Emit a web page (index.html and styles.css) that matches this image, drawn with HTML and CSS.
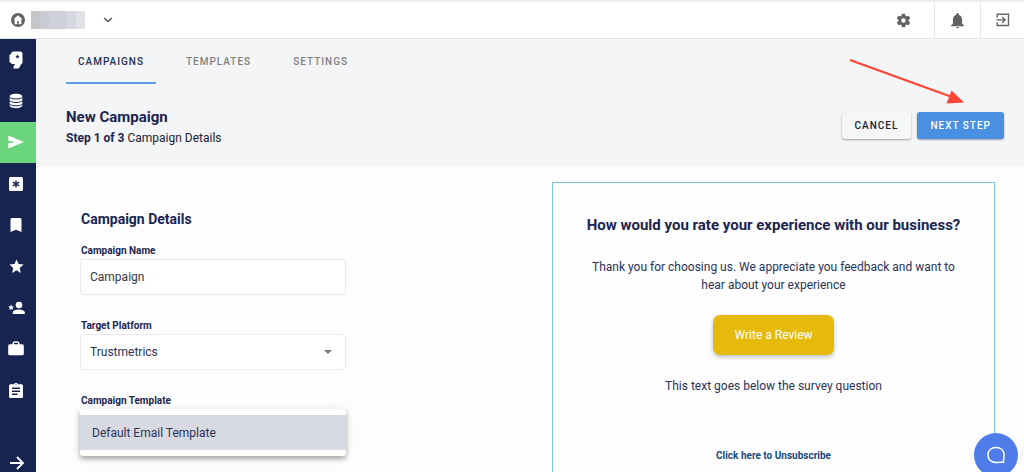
FILE: index.html
```html
<!DOCTYPE html>
<html lang="en">
<head>
<meta charset="utf-8">
<meta name="viewport" content="width=device-width, initial-scale=1">
<title>New Campaign</title>
<link rel="stylesheet" href="styles.css">
</head>
<body>
<div class="app">
  <header class="topbar">
    <div class="account">
      <svg class="home" viewBox="0 0 14 14" aria-hidden="true"><circle cx="7" cy="7" r="7" fill="#616264"/><path d="M7 2.200 2.600 6.300h1v4.900h2.600V7.900h1.600v3.300h2.600V6.300h1z" fill="#fff"/></svg>
      <span class="account-name" aria-hidden="true"><i></i><i></i><i></i><i></i><i></i><i></i></span>
      <button class="icon-button" type="button" aria-label="Switch account"><svg width="10" height="6" viewBox="0 0 10 6"><path d="m1.200 1 3.800 3.600L8.800 1" fill="none" stroke="#555" stroke-width="1.400"/></svg></button>
    </div>
    <div class="tools">
      <button class="icon-button tool tool-wide" type="button" aria-label="Settings"><svg width="17" height="17" viewBox="0 0 24 24" fill="#616264"><path d="M19.14 12.94c.04-.3.06-.61.06-.94s-.02-.64-.07-.94l2.03-1.58a.49.49 0 0 0 .12-.61l-1.92-3.32a.49.49 0 0 0-.59-.22l-2.39.96a7 7 0 0 0-1.62-.94l-.36-2.54A.48.48 0 0 0 13.92 2.4h-3.84a.48.48 0 0 0-.48.41l-.36 2.54c-.59.24-1.13.57-1.62.94l-2.39-.96a.48.48 0 0 0-.59.22L2.74 8.87a.48.48 0 0 0 .12.61l2.03 1.58a6 6 0 0 0 0 1.88l-2.03 1.58a.49.49 0 0 0-.12.61l1.92 3.32c.12.22.37.29.59.22l2.39-.96c.5.38 1.03.7 1.62.94l.36 2.54c.05.24.24.41.48.41h3.84c.24 0 .44-.17.47-.41l.36-2.54a7 7 0 0 0 1.62-.94l2.39.96c.22.08.47 0 .59-.22l1.92-3.32a.48.48 0 0 0-.12-.61zM12 15.2a3.200 3.200 0 1 1 0-6.400 3.200 3.200 0 0 1 0 6.400z"/></svg></button>
      <button class="icon-button tool" type="button" aria-label="Notifications"><svg width="17" height="17" viewBox="0 0 24 24" fill="#616264"><path d="M12 23a2 2 0 0 0 2-2h-4a2 2 0 0 0 2 2zm6.500-6.500v-5.500c0-3.400-1.700-6-4.700-6.700V3.300a1.800 1.800 0 0 0-3.600 0v1C7.200 5 5.500 7.600 5.500 11v5.500L3 18.800V20h18v-1.200z"/></svg></button>
      <button class="icon-button tool" type="button" aria-label="Log out"><svg width="14" height="14" viewBox="0 0 14 14" fill="none" stroke="#666" stroke-width="1.400"><path d="M1.200 4.500V1.200h11.300v11.300H1.200V9.200M.5 6.850h8M6.200 4l2.900 2.850-2.900 2.850"/></svg></button>
    </div>
  </header>
  <div class="body">
    <nav class="sidebar" aria-label="Main">
      <ul class="side-list">
        <li><a href="#" aria-label="Dashboard"><svg width="18" height="18" viewBox="0 0 18 18" fill="#fff"><path fill-rule="evenodd" d="M6 .5h7Q15.500.5 15.500 3v8q0 1.500-1 2.300L13.300 14v1.200L11.500 17.500H6.500V15.500L8 13H5L2.500 11V3.500H4V2zM10.500 3.500l-.6 1.300-1.400.2 1 1-.3 1.400 1.300-.7 1.300.7-.3-1.400 1-1-1.400-.2z"/></svg></a></li>
        <li><a href="#" aria-label="Data"><svg width="14" height="16" viewBox="0 0 14 16"><path d="M.7 3.400C.7 0 13.300 0 13.300 3.400v9.200c0 3.400-12.600 3.400-12.600 0z" fill="#fff"/><path d="M.5 4c1 2.700 12 2.700 13 0M.5 7.400c1 2.700 12 2.700 13 0M.5 10.800c1 2.700 12 2.700 13 0" fill="none" stroke="#182450" stroke-width="1"/></svg></a></li>
        <li><a class="active" href="#" aria-label="Campaigns" aria-current="page"><svg width="16" height="14" viewBox="0 0 16 14" fill="#fff"><path d="M.3.500 15.900 7 .3 13.500V8.300L7.500 7 .3 5.700z"/></svg></a></li>
        <li><a href="#" aria-label="Keywords"><svg width="14" height="14" viewBox="0 0 14 14"><rect width="14" height="14" rx="1.500" fill="#fff"/><path d="M7 3.400v7.200M3.900 5.200l6.200 3.600M10.100 5.200 3.900 8.800" stroke="#182450" stroke-width="1.400"/></svg></a></li>
        <li><a href="#" aria-label="Bookmarks"><svg width="12" height="14" viewBox="0 0 12 14" fill="#fff"><path d="M2 0h8q1.500 0 1.500 1.500V14L6 11.700.5 14V1.500Q.5 0 2 0z"/></svg></a></li>
        <li><a href="#" aria-label="Favorites"><svg width="17" height="17" viewBox="0 0 24 24" fill="#fff"><path d="M12 17.270 18.180 21l-1.640-7.030L22 9.240l-7.190-.61L12 2 9.190 8.630 2 9.240l5.460 4.730L5.820 21z"/></svg></a></li>
        <li><a href="#" aria-label="Contacts"><svg width="17" height="14" viewBox="0 0 17 14" fill="#fff"><circle cx="11" cy="4" r="3.300"/><path d="M4.800 13v-1.600C4.800 7.500 16.800 7.500 16.800 11.400V13zM3.100 3.500l.9 1.900 2 .2-1.500 1.400.4 2.100-1.800-1-1.800 1 .4-2.100L.2 5.600l2-.2z"/></svg></a></li>
        <li><a href="#" aria-label="Business"><svg width="16" height="15" viewBox="0 0 16 15" fill="#fff"><path fill-rule="evenodd" d="M6 .3h4l1.500 1.500v1.500h2.800q1.500 0 1.500 1.500v8q0 1.500-1.500 1.500H1.700Q.2 14.300.2 12.800v-8q0-1.500 1.500-1.500h2.800V1.800zM6 1.800v1.500h4V1.800z"/></svg></a></li>
        <li><a href="#" aria-label="Reports"><svg width="14" height="15" viewBox="0 0 14 15"><path d="M1.500 1.300H5a2.100 2.100 0 0 1 4 0h3.500Q14 1.300 14 2.800v10.700Q14 15 12.500 15h-11Q0 15 0 13.500V2.800q0-1.500 1.500-1.500z" fill="#fff"/><path d="M3 5.300h8M3 8.300h8M3 11.300h5.500" stroke="#182450" stroke-width="1.400"/><circle cx="7" cy="2" r=".6" fill="#182450"/></svg></a></li>
      </ul>
      <button class="icon-button expand" type="button" aria-label="Expand menu"><svg width="14" height="14" viewBox="0 0 14 14" fill="none" stroke="#fff" stroke-width="1.800"><path d="M0 7h12.500M7 1l6 6-6 6"/></svg></button>
    </nav>
    <main class="main">
      <section class="page-head">
        <nav class="tabs" aria-label="Sections">
          <a class="tab selected" href="#" aria-current="page">CAMPAIGNS</a>
          <a class="tab" href="#">TEMPLATES</a>
          <a class="tab" href="#">SETTINGS</a>
        </nav>
        <div class="title-row">
          <div>
            <h1 class="title">New Campaign</h1>
            <p class="step"><strong>Step 1 of 3</strong> Campaign Details</p>
          </div>
          <div class="actions">
            <button class="button" type="button">CANCEL</button>
            <button class="button primary" type="button">NEXT STEP</button>
          </div>
        </div>
      </section>
      <div class="content">
        <form class="details">
          <h2 class="form-title">Campaign Details</h2>
          <div class="field">
            <label for="name">Campaign Name</label>
            <input class="control" id="name" type="text" value="Campaign">
          </div>
          <div class="field">
            <label for="platform">Target Platform</label>
            <div class="select-wrap">
              <select class="control" id="platform"><option>Trustmetrics</option></select>
              <svg class="caret" width="8" height="4" viewBox="0 0 8 4" aria-hidden="true"><path d="M0 0h8L4 4z" fill="#757575"/></svg>
            </div>
          </div>
          <div class="field">
            <span class="label" id="template-label">Campaign Template</span>
            <div class="menu" role="listbox" aria-labelledby="template-label">
              <button class="option" type="button" role="option" aria-selected="true">Default Email Template</button>
            </div>
          </div>
        </form>
        <section class="preview" aria-label="Email preview">
          <h2 class="question">How would you rate your experience with our business?</h2>
          <p class="message">Thank you for choosing us. We appreciate you feedback and want to hear about your experience</p>
          <button class="review" type="button">Write a Review</button>
          <p class="below">This text goes below the survey question</p>
          <a class="unsubscribe" href="#">Click here to Unsubscribe</a>
        </section>
      </div>
    </main>
  </div>
</div>
<svg class="pointer" width="118" height="48" viewBox="0 0 118 48" aria-hidden="true"><path d="M2 2 104 39" stroke="#fe4536" stroke-width="2.200"/><path d="M103.500 32.500 116 44.500 98.500 45.500z" fill="#fe4536"/></svg>
<button class="chat" type="button" aria-label="Open chat"><svg width="18" height="18" viewBox="0 0 18 18" fill="none" stroke="#fff" stroke-width="1.500" stroke-linejoin="round"><path d="M16.600 16.300h-3.800C10.500 16.600 8 16.800 6 16 2.500 14.800 1 12 1 9c0-4.500 3-7.500 8-7.500s8 3 8 7.500c0 2 0 3.300-.4 4.500z"/></svg></button>
</body>
</html>
```
FILE: styles.css
```css
* { box-sizing: border-box; }
body {
  margin: 0;
  font-family: Roboto, "Liberation Sans", sans-serif;
  font-size: 12px;
  color: #1b2550;
  background: #fdfdfe;
}
h1, h2, p, ul { margin: 0; padding: 0; }
ul { list-style: none; }
a { color: inherit; text-decoration: none; }
button, input, select { font: inherit; color: inherit; }
svg { display: block; flex: none; }
.app { display: flex; flex-direction: column; height: 100vh; overflow: hidden; }
.icon-button {
  display: flex;
  align-items: center;
  justify-content: center;
  padding: 0;
  border: 0;
  background: none;
}
.topbar {
  display: flex;
  justify-content: space-between;
  flex: none;
  height: 39px;
  border-top: 2px solid #ececed;
  border-bottom: 1px solid #e3e4e6;
  background: #fff;
}
.account { display: flex; align-items: center; padding-left: 11px; }
.home { width: 14px; height: 14px; }
.account-name { display: flex; width: 54px; height: 18px; margin: 0 18px 0 6px; }
.account-name i { flex: 1; background: #cfd1d8; }
.account-name i:nth-child(1) { background: #c5c6ca; }
.account-name i:nth-child(2) { background: #c9cbd2; }
.account-name i:nth-child(5) { background: #d5d8df; }
.account-name i:nth-child(6) { background: #e0e2e7; }
.tools { display: flex; }
.tool { width: 46px; border-left: 1px solid #e6e7e9; }
.tool:last-child { width: 44px; }
.tool-wide { width: 61px; border-left: 0; }
.body { display: flex; flex: 1; min-height: 0; }
.sidebar { display: flex; flex-direction: column; width: 36px; flex: none; background: #182450; }
.side-list { display: flex; flex-direction: column; flex: 1; padding-bottom: 43px; }
.side-list li { display: flex; flex: 1; }
.side-list a { display: flex; flex: 1; align-items: center; justify-content: center; padding-right: 4px; }
.side-list .active { background: #6bd57d; }
.expand { height: 18px; padding-right: 2px; }
.main { flex: 1; min-width: 0; overflow: hidden; }
.page-head { padding: 0 20px 20px 30px; background: #f4f5f7; }
.tabs { display: flex; gap: 18px; }
.tab {
  padding: 16px 12px 13px;
  border-bottom: 2px solid transparent;
  font-size: 10px;
  font-weight: 500;
  line-height: 14px;
  letter-spacing: 1px;
  color: #808080;
}
.tab.selected { border-color: #5f9de3; color: #233056; }
.title-row { display: flex; justify-content: space-between; align-items: flex-end; padding-top: 23px; }
.title { font-size: 15px; line-height: 20px; }
.step { padding-top: 3px; line-height: 17px; color: #20222e; }
.step strong { color: #1b2550; }
.actions { display: flex; gap: 6px; padding-bottom: 8px; }
.button {
  height: 27px;
  padding: 0 13px;
  border: 0;
  border-radius: 3px;
  font-size: 10px;
  font-weight: 500;
  letter-spacing: 1px;
  color: #20222e;
  background: #f5f6f6;
  box-shadow: 0 1px 2px rgba(0, 0, 0, .35);
}
.button.primary { color: #fff; background: #4990e2; }
.content { display: flex; justify-content: space-between; padding: 15px 29px 0 44px; }
.details { width: 266px; padding-top: 27px; }
.form-title { font-size: 14px; line-height: 20px; padding-bottom: 16px; }
.field { display: flex; flex-direction: column; padding-bottom: 25px; }
.field label, .label { font-size: 10px; font-weight: 700; line-height: 12px; padding-bottom: 2px; }
.form-title, .field label, .label { padding-left: 1px; }
.control {
  width: 100%;
  height: 36px;
  padding: 0 9px;
  border: 1px solid #e9e9ec;
  border-radius: 3px;
  background: #fff;
  appearance: none;
  color: #2a3358;
}
input.control { color: #35363c; }
.select-wrap { position: relative; }
.caret { position: absolute; right: 14px; top: 16px; pointer-events: none; }
.menu {
  padding: 6px 0;
  border-radius: 3px;
  background: #fff;
  box-shadow: 0 3px 4px rgba(0, 0, 0, .25), 0 2px 10px rgba(0, 0, 0, .15);
}
.option {
  display: block;
  width: 100%;
  height: 35px;
  padding: 0 12px;
  border: 0;
  text-align: left;
  color: #2a3358;
  background: #d7dae2;
}
.preview {
  display: flex;
  flex-direction: column;
  align-items: center;
  width: 443px;
  padding: 32px 32px 40px;
  border: 1px solid #7cc6dd;
  text-align: center;
  color: #2a3358;
}
.question { font-size: 15px; line-height: 20px; color: #1b2550; }
.message { padding: 23px 0 21px; line-height: 18px; }
.review {
  height: 40px;
  padding: 0 21px;
  border: 0;
  border-radius: 7px;
  color: #fff;
  background: #e6ba0d;
  box-shadow: 0 2px 4px rgba(0, 0, 0, .25);
}
.below { padding: 22px 0 54px; line-height: 18px; }
.unsubscribe { font-size: 10px; font-weight: 700; line-height: 14px; color: #174a7e; }
.pointer { position: absolute; right: 58px; top: 58px; }
.chat {
  position: fixed;
  right: 6px;
  bottom: -5px;
  display: flex;
  align-items: center;
  justify-content: center;
  width: 44px;
  height: 44px;
  padding: 0;
  border: 0;
  border-radius: 50%;
  background: #4e7ce8;
}
```
